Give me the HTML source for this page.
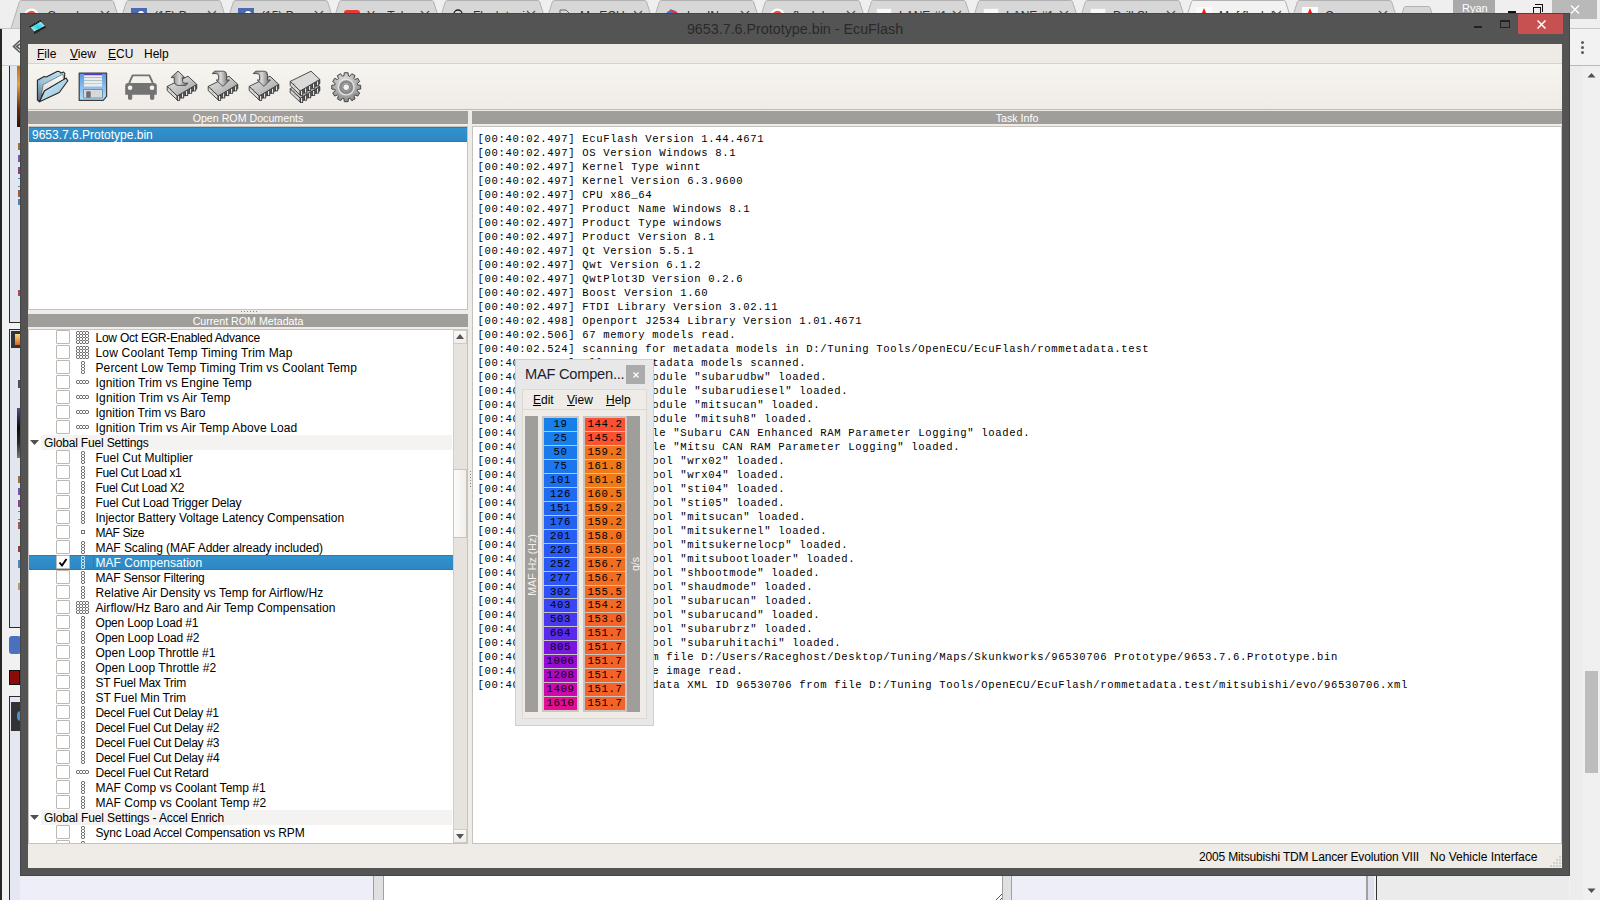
<!DOCTYPE html><html><head><meta charset="utf-8"><style>
*{margin:0;padding:0;box-sizing:border-box}
html,body{width:1600px;height:900px;overflow:hidden;background:#f2f2f2;position:relative;font-family:"Liberation Sans",sans-serif}
.ab{position:absolute}
.t{position:absolute;white-space:nowrap;font-family:"Liberation Sans",sans-serif;font-size:12px;line-height:15px;color:#000}
.m{position:absolute;white-space:pre;font-family:"Liberation Mono",monospace;font-size:10.6px;letter-spacing:0.64px;line-height:14px;color:#000}
u{text-decoration:underline;text-underline-offset:1px;text-decoration-thickness:1px}
</style></head><body>
<div class="ab" style="left:0;top:0;width:1600px;height:28px;background:#efefef"></div><svg class="ab" style="left:10px;top:0" width="120" height="30"><path d="M0.5 30 L9.5 1.5 Q10 0.5 12 0.5 L101 0.5 Q103 0.5 103.5 1.5 L112.5 30 Z" fill="#d7d7d7" stroke="#b2b2b2" stroke-width="1"/></svg><svg class="ab" style="left:24px;top:8px" width="16" height="16"><circle cx="7.5" cy="8" r="7.5" fill="#fff"/><path d="M3.5 8 A4 4 0 0 1 11 6" fill="none" stroke="#e8574a" stroke-width="2.4"/></svg><div class="t" style="left:47px;top:9px;font-size:12px;color:#333">Google</div><svg class="ab" style="left:100px;top:10px" width="10" height="10"><path d="M1 1L9 9M9 1L1 9" stroke="#5a5a5a" stroke-width="1.3"/></svg><svg class="ab" style="left:117px;top:0" width="120" height="30"><path d="M0.5 30 L9.5 1.5 Q10 0.5 12 0.5 L101 0.5 Q103 0.5 103.5 1.5 L112.5 30 Z" fill="#d7d7d7" stroke="#b2b2b2" stroke-width="1"/></svg><div class="ab" style="left:131px;top:8px;width:16px;height:16px;background:#4c6aaf"><div class="ab" style="left:7px;top:3px;width:6px;height:3px;border-radius:3px 3px 0 0;background:#fff"></div></div><div class="t" style="left:154px;top:9px;font-size:12px;color:#333">(15) Pa</div><svg class="ab" style="left:207px;top:10px" width="10" height="10"><path d="M1 1L9 9M9 1L1 9" stroke="#5a5a5a" stroke-width="1.3"/></svg><svg class="ab" style="left:224px;top:0" width="120" height="30"><path d="M0.5 30 L9.5 1.5 Q10 0.5 12 0.5 L101 0.5 Q103 0.5 103.5 1.5 L112.5 30 Z" fill="#d7d7d7" stroke="#b2b2b2" stroke-width="1"/></svg><div class="ab" style="left:238px;top:8px;width:16px;height:16px;background:#4c6aaf"><div class="ab" style="left:7px;top:3px;width:6px;height:3px;border-radius:3px 3px 0 0;background:#fff"></div></div><div class="t" style="left:261px;top:9px;font-size:12px;color:#333">(15) Pa</div><svg class="ab" style="left:314px;top:10px" width="10" height="10"><path d="M1 1L9 9M9 1L1 9" stroke="#5a5a5a" stroke-width="1.3"/></svg><svg class="ab" style="left:330px;top:0" width="120" height="30"><path d="M0.5 30 L9.5 1.5 Q10 0.5 12 0.5 L101 0.5 Q103 0.5 103.5 1.5 L112.5 30 Z" fill="#d7d7d7" stroke="#b2b2b2" stroke-width="1"/></svg><div class="ab" style="left:344px;top:10px;width:16px;height:12px;background:#e53935;border-radius:3px"></div><div class="t" style="left:367px;top:9px;font-size:12px;color:#333">YouTube</div><svg class="ab" style="left:420px;top:10px" width="10" height="10"><path d="M1 1L9 9M9 1L1 9" stroke="#5a5a5a" stroke-width="1.3"/></svg><svg class="ab" style="left:436px;top:0" width="120" height="30"><path d="M0.5 30 L9.5 1.5 Q10 0.5 12 0.5 L101 0.5 Q103 0.5 103.5 1.5 L112.5 30 Z" fill="#d7d7d7" stroke="#b2b2b2" stroke-width="1"/></svg><svg class="ab" style="left:450px;top:8px" width="16" height="16"><path d="M4 6 A4 4 0 0 1 12 6" fill="none" stroke="#222" stroke-width="1.4"/><rect x="1" y="6" width="14" height="9" fill="#111"/></svg><div class="t" style="left:473px;top:9px;font-size:12px;color:#333">Flash tuning</div><svg class="ab" style="left:526px;top:10px" width="10" height="10"><path d="M1 1L9 9M9 1L1 9" stroke="#5a5a5a" stroke-width="1.3"/></svg><svg class="ab" style="left:543px;top:0" width="120" height="30"><path d="M0.5 30 L9.5 1.5 Q10 0.5 12 0.5 L101 0.5 Q103 0.5 103.5 1.5 L112.5 30 Z" fill="#d7d7d7" stroke="#b2b2b2" stroke-width="1"/></svg><svg class="ab" style="left:557px;top:9px" width="16" height="16"><path d="M3 15 V1 H9 L13 5 V15" fill="none" stroke="#666" stroke-width="1"/></svg><div class="t" style="left:580px;top:9px;font-size:12px;color:#333">My ECU</div><svg class="ab" style="left:633px;top:10px" width="10" height="10"><path d="M1 1L9 9M9 1L1 9" stroke="#5a5a5a" stroke-width="1.3"/></svg><svg class="ab" style="left:650px;top:0" width="120" height="30"><path d="M0.5 30 L9.5 1.5 Q10 0.5 12 0.5 L101 0.5 Q103 0.5 103.5 1.5 L112.5 30 Z" fill="#d7d7d7" stroke="#b2b2b2" stroke-width="1"/></svg><svg class="ab" style="left:664px;top:9px" width="16" height="16"><circle cx="8" cy="8" r="7" fill="#3a7bd5"/><path d="M6 1 L12 4 L14 7" stroke="#e53935" stroke-width="2" fill="none"/></svg><div class="t" style="left:687px;top:9px;font-size:12px;color:#333">LanIN</div><svg class="ab" style="left:740px;top:10px" width="10" height="10"><path d="M1 1L9 9M9 1L1 9" stroke="#5a5a5a" stroke-width="1.3"/></svg><svg class="ab" style="left:756px;top:0" width="120" height="30"><path d="M0.5 30 L9.5 1.5 Q10 0.5 12 0.5 L101 0.5 Q103 0.5 103.5 1.5 L112.5 30 Z" fill="#d7d7d7" stroke="#b2b2b2" stroke-width="1"/></svg><svg class="ab" style="left:770px;top:8px" width="16" height="16"><circle cx="7.5" cy="8" r="7.5" fill="#fff"/><path d="M3.5 8 A4 4 0 0 1 11 6" fill="none" stroke="#e8574a" stroke-width="2.4"/></svg><div class="t" style="left:793px;top:9px;font-size:12px;color:#333">flash l</div><svg class="ab" style="left:846px;top:10px" width="10" height="10"><path d="M1 1L9 9M9 1L1 9" stroke="#5a5a5a" stroke-width="1.3"/></svg><svg class="ab" style="left:862px;top:0" width="120" height="30"><path d="M0.5 30 L9.5 1.5 Q10 0.5 12 0.5 L101 0.5 Q103 0.5 103.5 1.5 L112.5 30 Z" fill="#d7d7d7" stroke="#b2b2b2" stroke-width="1"/></svg><div class="ab" style="left:876px;top:8px;width:16px;height:16px;background:#f8f8f8;border:1px solid #ddd"><div class="ab" style="left:3px;top:4px;width:8px;height:3px;border-top:1px dotted #8aa"></div></div><div class="t" style="left:899px;top:9px;font-size:12px;color:#333">LANE #1</div><svg class="ab" style="left:952px;top:10px" width="10" height="10"><path d="M1 1L9 9M9 1L1 9" stroke="#5a5a5a" stroke-width="1.3"/></svg><svg class="ab" style="left:969px;top:0" width="120" height="30"><path d="M0.5 30 L9.5 1.5 Q10 0.5 12 0.5 L101 0.5 Q103 0.5 103.5 1.5 L112.5 30 Z" fill="#d7d7d7" stroke="#b2b2b2" stroke-width="1"/></svg><div class="ab" style="left:983px;top:8px;width:16px;height:16px;background:#f8f8f8;border:1px solid #ddd"><div class="ab" style="left:3px;top:4px;width:8px;height:3px;border-top:1px dotted #8aa"></div></div><div class="t" style="left:1006px;top:9px;font-size:12px;color:#333">LANE #1</div><svg class="ab" style="left:1059px;top:10px" width="10" height="10"><path d="M1 1L9 9M9 1L1 9" stroke="#5a5a5a" stroke-width="1.3"/></svg><svg class="ab" style="left:1076px;top:0" width="120" height="30"><path d="M0.5 30 L9.5 1.5 Q10 0.5 12 0.5 L101 0.5 Q103 0.5 103.5 1.5 L112.5 30 Z" fill="#d7d7d7" stroke="#b2b2b2" stroke-width="1"/></svg><div class="ab" style="left:1090px;top:8px;width:16px;height:16px;background:#f8f8f8;border:1px solid #ddd"><div class="ab" style="left:3px;top:4px;width:8px;height:3px;border-top:1px dotted #8aa"></div></div><div class="t" style="left:1113px;top:9px;font-size:12px;color:#333">Drill Sl</div><svg class="ab" style="left:1166px;top:10px" width="10" height="10"><path d="M1 1L9 9M9 1L1 9" stroke="#5a5a5a" stroke-width="1.3"/></svg><svg class="ab" style="left:1182px;top:0" width="120" height="30"><path d="M0.5 30 L9.5 1.5 Q10 0.5 12 0.5 L101 0.5 Q103 0.5 103.5 1.5 L112.5 30 Z" fill="#f2f2f2" stroke="#b2b2b2" stroke-width="1"/></svg><div class="ab" style="left:1196px;top:7px;width:16px;height:16px;background:#fafafa"><svg class="ab" style="left:3px;top:1px" width="10" height="10"><path d="M5 0 L9 10 H1Z" fill="#f21c0a"/></svg></div><div class="t" style="left:1219px;top:9px;font-size:12px;color:#333">Maf flash l</div><svg class="ab" style="left:1272px;top:10px" width="10" height="10"><path d="M1 1L9 9M9 1L1 9" stroke="#5a5a5a" stroke-width="1.3"/></svg><svg class="ab" style="left:1288px;top:0" width="120" height="30"><path d="M0.5 30 L9.5 1.5 Q10 0.5 12 0.5 L101 0.5 Q103 0.5 103.5 1.5 L112.5 30 Z" fill="#d7d7d7" stroke="#b2b2b2" stroke-width="1"/></svg><div class="ab" style="left:1302px;top:7px;width:16px;height:16px;background:#fafafa"><svg class="ab" style="left:3px;top:1px" width="10" height="10"><path d="M5 0 L9 10 H1Z" fill="#f21c0a"/></svg></div><div class="t" style="left:1325px;top:9px;font-size:12px;color:#333">Com</div><svg class="ab" style="left:1378px;top:10px" width="10" height="10"><path d="M1 1L9 9M9 1L1 9" stroke="#5a5a5a" stroke-width="1.3"/></svg><svg class="ab" style="left:1400px;top:6px" width="36" height="14"><path d="M0.5 14 L4 1.5 Q4.5 0.5 6 0.5 L28 0.5 Q29.5 0.5 30 1.5 L34 14Z" fill="#d7d7d7" stroke="#b2b2b2"/></svg><div class="ab" style="left:1453px;top:0;width:42px;height:13px;background:#a9a9a9"></div><div class="t" style="left:1462px;top:2px;color:#fff;font-size:11px;line-height:12px">Ryan</div><div class="ab" style="left:1508px;top:11px;width:8px;height:2px;background:#111"></div><div class="ab" style="left:1533px;top:7px;width:8px;height:8px;border:1px solid #111"></div><div class="ab" style="left:1535px;top:4px;width:8px;height:8px;border-top:1px solid #111;border-right:1px solid #111"></div><div class="ab" style="left:1552px;top:0;width:45px;height:19px;background:#b9b9b9"></div><svg class="ab" style="left:1570px;top:5px" width="10" height="9"><path d="M1 0.5L9 8.5M9 0.5L1 8.5" stroke="#fff" stroke-width="1.4"/></svg><div class="ab" style="left:1570px;top:28px;width:30px;height:872px;background:#f2f2f2;border-top:1px solid #c8c8c8"></div><div class="ab" style="left:1581px;top:41px;width:3px;height:3px;border-radius:50%;background:#5a5a5a"></div><div class="ab" style="left:1581px;top:46px;width:3px;height:3px;border-radius:50%;background:#5a5a5a"></div><div class="ab" style="left:1581px;top:51px;width:3px;height:3px;border-radius:50%;background:#5a5a5a"></div><div class="ab" style="left:1570px;top:65px;width:30px;height:1px;background:#b9b9b9"></div><div class="ab" style="left:1570px;top:66px;width:13px;height:834px;background:#ececec"></div><div class="ab" style="left:1583px;top:66px;width:17px;height:834px;background:#f0f0f0"></div><svg class="ab" style="left:1587px;top:72px" width="9" height="6"><path d="M0.5 5.5 L4.5 1 L8.5 5.5Z" fill="#505050"/></svg><div class="ab" style="left:1585px;top:671px;width:13px;height:102px;background:#bdbdbd"></div><svg class="ab" style="left:1587px;top:888px" width="9" height="6"><path d="M0.5 0.5 L4.5 5 L8.5 0.5Z" fill="#505050"/></svg><div class="ab" style="left:0;top:29px;width:2px;height:871px;background:#262626"></div><div class="ab" style="left:2px;top:29px;width:18px;height:871px;background:#f1f1f1"></div><div class="ab" style="left:0;top:28px;width:20px;height:1px;background:#c4c4c4"></div><svg class="ab" style="left:12px;top:39px" width="8" height="16"><path d="M8 1.5 L1.5 7.5 L8 13.5 M8 5 L4.5 7.5 L8 10" fill="none" stroke="#5a5a5a" stroke-width="1.6"/></svg><div class="ab" style="left:2px;top:65px;width:18px;height:1px;background:#cacaca"></div><div class="ab" style="left:9px;top:66px;width:11px;height:257px;background:#e2e6ee;border-left:1px solid #2a2a2a;border-bottom:1px solid #2a2a2a"></div><div class="ab" style="left:17px;top:66px;width:3px;height:61px;background:linear-gradient(#c0701a,#e8a030 30%,#6a2a08 70%,#301008)"></div><div class="ab" style="left:18px;top:143px;width:2px;height:7px;background:#8a5020;opacity:0.8"></div><div class="ab" style="left:18px;top:155px;width:2px;height:7px;background:#6a2aa0;opacity:0.8"></div><div class="ab" style="left:18px;top:167px;width:2px;height:7px;background:#7a1a6a;opacity:0.8"></div><div class="ab" style="left:18px;top:178px;width:2px;height:1px;background:#2a70c0;opacity:0.8"></div><div class="ab" style="left:18px;top:186px;width:2px;height:1px;background:#2a70c0;opacity:0.8"></div><div class="ab" style="left:18px;top:190px;width:2px;height:7px;background:#8a3a20;opacity:0.8"></div><div class="ab" style="left:18px;top:199px;width:2px;height:6px;background:#2a6ab0;opacity:0.8"></div><div class="ab" style="left:18px;top:290px;width:2px;height:6px;background:#a02040;opacity:0.8"></div><div class="ab" style="left:9px;top:329px;width:11px;height:299px;background:#e2e6ee;border-left:1px solid #2a2a2a;border-top:1px solid #2a2a2a;border-bottom:1px solid #2a2a2a"></div><div class="ab" style="left:11px;top:331px;width:9px;height:17px;background:#333"></div><div class="ab" style="left:15px;top:334px;width:5px;height:11px;background:linear-gradient(#f8e080,#e06020)"></div><div class="ab" style="left:17px;top:408px;width:3px;height:50px;background:linear-gradient(#5a4a8a,#0a0a10 40%,#2a2a2a 70%,#7a7a70)"></div><div class="ab" style="left:18px;top:380px;width:2px;height:8px;background:#2a2a2a;opacity:0.8"></div><div class="ab" style="left:18px;top:476px;width:2px;height:7px;background:#8a5020;opacity:0.8"></div><div class="ab" style="left:18px;top:488px;width:2px;height:7px;background:#6a2aa0;opacity:0.8"></div><div class="ab" style="left:18px;top:500px;width:2px;height:7px;background:#7a1a6a;opacity:0.8"></div><div class="ab" style="left:18px;top:511px;width:2px;height:1px;background:#2a70c0;opacity:0.8"></div><div class="ab" style="left:18px;top:519px;width:2px;height:1px;background:#2a70c0;opacity:0.8"></div><div class="ab" style="left:18px;top:522px;width:2px;height:7px;background:#8a3a20;opacity:0.8"></div><div class="ab" style="left:18px;top:546px;width:2px;height:6px;background:#8a1010;opacity:0.8"></div><div class="ab" style="left:18px;top:560px;width:2px;height:8px;background:#3070b0;opacity:0.8"></div><div class="ab" style="left:18px;top:583px;width:2px;height:7px;background:#c08040;opacity:0.8"></div><div class="ab" style="left:9px;top:636px;width:12px;height:18px;background:#4a70c0;border-radius:3px"></div><div class="ab" style="left:9px;top:670px;width:11px;height:15px;background:#8b0a0a;border:1px solid #111"></div><div class="ab" style="left:9px;top:696px;width:11px;height:204px;background:#e4e7f2;border-left:1px solid #2a2a2a;border-top:1px solid #2a2a2a"></div><div class="ab" style="left:11px;top:702px;width:9px;height:29px;background:#333"></div><div class="ab" style="left:17px;top:711px;width:4px;height:10px;background:#4a90d0;border-radius:4px 0 0 4px"></div><div class="ab" style="left:20px;top:875px;width:353px;height:25px;background:#eeeef8"></div><div class="ab" style="left:373px;top:875px;width:11px;height:25px;background:#e0e0e0;border-left:1px solid #a0a0a0;border-right:1px solid #a0a0a0"></div><div class="ab" style="left:384px;top:875px;width:618px;height:25px;background:#fff"></div><div class="ab" style="left:1002px;top:875px;width:10px;height:25px;background:#e0e0e0;border-left:1px solid #a0a0a0;border-right:1px solid #a0a0a0"></div><div class="ab" style="left:1012px;top:875px;width:356px;height:25px;background:#eeeef8"></div><div class="ab" style="left:1366px;top:875px;width:2px;height:25px;background:#a0a0a0"></div><div class="ab" style="left:1368px;top:875px;width:6px;height:25px;background:#dde0ee"></div><div class="ab" style="left:1376px;top:875px;width:1px;height:25px;background:#333"></div><div class="ab" style="left:1377px;top:875px;width:192px;height:25px;background:#ebebeb"></div><svg class="ab" style="left:992px;top:892px" width="10" height="8"><path d="M4 8 L10 2 M8 8 L10 6" stroke="#555" stroke-width="1"/></svg><div class="ab" style="left:20px;top:13px;width:1550px;height:863px;background:#545454;border:1px solid #464646"></div><div class="t" style="left:0;width:1590px;top:21px;text-align:center;font-size:14.3px;line-height:17px;color:#2a2a2a">9653.7.6.Prototype.bin - EcuFlash</div><div class="ab" style="left:1474px;top:26px;width:8px;height:2px;background:#222"></div><div class="ab" style="left:1500px;top:20px;width:10px;height:8px;border:1px solid #222;border-top-width:2px"></div><div class="ab" style="left:1518px;top:14px;width:45px;height:20px;background:#c75050"></div><svg class="ab" style="left:1537px;top:20px" width="9" height="9"><path d="M0.5 0.5 L8.5 8.5 M8.5 0.5 L0.5 8.5" stroke="#fff" stroke-width="1.5"/></svg><svg class="ab" style="left:29px;top:19px" width="19" height="16"><defs><radialGradient id="gcy" cx="0.5" cy="0.5" r="0.6"><stop offset="0" stop-color="#00dcec"/><stop offset="0.6" stop-color="#7ee0ea"/><stop offset="1" stop-color="#f0f0f0"/></radialGradient></defs><circle cx="1.60" cy="7.40" r="0.9" fill="#111"/><circle cx="3.55" cy="6.28" r="0.9" fill="#111"/><circle cx="5.50" cy="5.16" r="0.9" fill="#111"/><circle cx="7.45" cy="4.04" r="0.9" fill="#111"/><circle cx="9.40" cy="2.92" r="0.9" fill="#111"/><circle cx="11.35" cy="1.80" r="0.9" fill="#111"/><path d="M5.60 13.20 l0.6 1.6" stroke="#111" stroke-width="1.4"/><path d="M7.60 12.05 l0.6 1.6" stroke="#111" stroke-width="1.4"/><path d="M9.60 10.90 l0.6 1.6" stroke="#111" stroke-width="1.4"/><path d="M11.60 9.75 l0.6 1.6" stroke="#111" stroke-width="1.4"/><path d="M13.60 8.60 l0.6 1.6" stroke="#111" stroke-width="1.4"/><path d="M15.60 7.45 l0.6 1.6" stroke="#111" stroke-width="1.4"/><path d="M1.8 8.4 L11.7 2.7 L15.9 6.9 L5.4 12.6Z" fill="url(#gcy)"/><path d="M15.9 6.9 L16 8.2 L5.6 13.8 L5.4 12.6Z" fill="#1a1a1a"/></svg><div class="ab" style="left:28px;top:44px;width:1534px;height:824px;background:#efebe7"></div><div class="ab" style="left:28px;top:44px;width:1534px;height:20px;background:#eeebe6;border-bottom:1px solid #d6d2cd"></div><div class="t" style="left:37px;top:47px;line-height:15px"><u>F</u>ile</div><div class="t" style="left:70px;top:47px;line-height:15px"><u>V</u>iew</div><div class="t" style="left:108px;top:47px;line-height:15px"><u>E</u>CU</div><div class="t" style="left:144px;top:47px">Help</div><div class="ab" style="left:28px;top:64px;width:1534px;height:46px;background:linear-gradient(#f7f5f0,#efebe6);border-bottom:1px solid #bfbbb6"></div><div class="ab" style="left:28px;top:111px;width:440px;height:13px;background:#a09e9a"></div><div class="t" style="left:28px;width:440px;top:111px;text-align:center;color:#fff;line-height:15px;font-size:10.67px">Open ROM Documents</div><div class="ab" style="left:472px;top:111px;width:1090px;height:13px;background:#a09e9a"></div><div class="t" style="left:472px;width:1090px;top:111px;text-align:center;color:#fff;line-height:15px;font-size:10.67px">Task Info</div><div class="ab" style="left:28px;top:126px;width:440px;height:184px;background:#fff;border:1px solid #c6c2bd"></div><div class="ab" style="left:29px;top:127px;width:438px;height:15px;background:linear-gradient(#3292cd,#2d87c3);border-top:1px solid #2b7bb6;border-bottom:1px solid #2b7bb6"></div><div class="t" style="left:32px;top:128px;color:#fff">9653.7.6.Prototype.bin</div><div class="ab" style="left:28px;top:314px;width:440px;height:13px;background:#a09e9a"></div><div class="t" style="left:28px;width:440px;top:314px;text-align:center;color:#fff;line-height:15px;font-size:10.67px">Current ROM Metadata</div><div class="ab" style="left:241px;top:311px;width:1px;height:1px;background:#8a8682"></div><div class="ab" style="left:244px;top:311px;width:1px;height:1px;background:#8a8682"></div><div class="ab" style="left:247px;top:311px;width:1px;height:1px;background:#8a8682"></div><div class="ab" style="left:250px;top:311px;width:1px;height:1px;background:#8a8682"></div><div class="ab" style="left:253px;top:311px;width:1px;height:1px;background:#8a8682"></div><div class="ab" style="left:256px;top:311px;width:1px;height:1px;background:#8a8682"></div><div class="ab" style="left:28px;top:329px;width:440px;height:515px;background:#fff;border:1px solid #c6c2bd;overflow:hidden" id="tree"></div><div class="ab" style="left:472px;top:126px;width:1090px;height:718px;background:#fff;border:1px solid #c6c2bd"></div><div class="t" style="left:1199px;top:850px;letter-spacing:-0.16px">2005 Mitsubishi TDM Lancer Evolution VIII</div><div class="t" style="left:1430px;top:850px">No Vehicle Interface</div><svg width="0" height="0" style="position:absolute"><defs><g id="ig" shape-rendering="crispEdges"><rect x="0" y="0" width="13" height="13" fill="#727272"/><rect x="1" y="1" width="2" height="2" fill="#fff"/><rect x="1" y="4" width="2" height="2" fill="#fff"/><rect x="1" y="7" width="2" height="2" fill="#fff"/><rect x="1" y="10" width="2" height="2" fill="#fff"/><rect x="4" y="1" width="2" height="2" fill="#fff"/><rect x="4" y="4" width="2" height="2" fill="#fff"/><rect x="4" y="7" width="2" height="2" fill="#fff"/><rect x="4" y="10" width="2" height="2" fill="#fff"/><rect x="7" y="1" width="2" height="2" fill="#fff"/><rect x="7" y="4" width="2" height="2" fill="#fff"/><rect x="7" y="7" width="2" height="2" fill="#fff"/><rect x="7" y="10" width="2" height="2" fill="#fff"/><rect x="10" y="1" width="2" height="2" fill="#fff"/><rect x="10" y="4" width="2" height="2" fill="#fff"/><rect x="10" y="7" width="2" height="2" fill="#fff"/><rect x="10" y="10" width="2" height="2" fill="#fff"/><rect x="0" y="0" width="1" height="1" fill="#cfcfcf"/><rect x="0" y="3" width="1" height="1" fill="#cfcfcf"/><rect x="0" y="6" width="1" height="1" fill="#cfcfcf"/><rect x="0" y="9" width="1" height="1" fill="#cfcfcf"/><rect x="0" y="12" width="1" height="1" fill="#cfcfcf"/><rect x="3" y="0" width="1" height="1" fill="#cfcfcf"/><rect x="3" y="3" width="1" height="1" fill="#cfcfcf"/><rect x="3" y="6" width="1" height="1" fill="#cfcfcf"/><rect x="3" y="9" width="1" height="1" fill="#cfcfcf"/><rect x="3" y="12" width="1" height="1" fill="#cfcfcf"/><rect x="6" y="0" width="1" height="1" fill="#cfcfcf"/><rect x="6" y="3" width="1" height="1" fill="#cfcfcf"/><rect x="6" y="6" width="1" height="1" fill="#cfcfcf"/><rect x="6" y="9" width="1" height="1" fill="#cfcfcf"/><rect x="6" y="12" width="1" height="1" fill="#cfcfcf"/><rect x="9" y="0" width="1" height="1" fill="#cfcfcf"/><rect x="9" y="3" width="1" height="1" fill="#cfcfcf"/><rect x="9" y="6" width="1" height="1" fill="#cfcfcf"/><rect x="9" y="9" width="1" height="1" fill="#cfcfcf"/><rect x="9" y="12" width="1" height="1" fill="#cfcfcf"/><rect x="12" y="0" width="1" height="1" fill="#cfcfcf"/><rect x="12" y="3" width="1" height="1" fill="#cfcfcf"/><rect x="12" y="6" width="1" height="1" fill="#cfcfcf"/><rect x="12" y="9" width="1" height="1" fill="#cfcfcf"/><rect x="12" y="12" width="1" height="1" fill="#cfcfcf"/></g><g id="iv" shape-rendering="crispEdges"><rect x="0" y="0" width="4" height="13" fill="#727272"/><rect x="1" y="1" width="2" height="2" fill="#fff"/><rect x="1" y="4" width="2" height="2" fill="#fff"/><rect x="1" y="7" width="2" height="2" fill="#fff"/><rect x="1" y="10" width="2" height="2" fill="#fff"/><rect x="0" y="0" width="1" height="1" fill="#cfcfcf"/><rect x="0" y="3" width="1" height="1" fill="#cfcfcf"/><rect x="0" y="6" width="1" height="1" fill="#cfcfcf"/><rect x="0" y="9" width="1" height="1" fill="#cfcfcf"/><rect x="0" y="12" width="1" height="1" fill="#cfcfcf"/><rect x="3" y="0" width="1" height="1" fill="#cfcfcf"/><rect x="3" y="3" width="1" height="1" fill="#cfcfcf"/><rect x="3" y="6" width="1" height="1" fill="#cfcfcf"/><rect x="3" y="9" width="1" height="1" fill="#cfcfcf"/><rect x="3" y="12" width="1" height="1" fill="#cfcfcf"/></g><g id="iw" shape-rendering="crispEdges"><rect x="0" y="0" width="4" height="13" fill="#cfe6f6"/><rect x="1" y="1" width="2" height="2" fill="#308cc6"/><rect x="1" y="4" width="2" height="2" fill="#308cc6"/><rect x="1" y="7" width="2" height="2" fill="#308cc6"/><rect x="1" y="10" width="2" height="2" fill="#308cc6"/><rect x="0" y="0" width="1" height="1" fill="#80b8dc"/><rect x="0" y="3" width="1" height="1" fill="#80b8dc"/><rect x="0" y="6" width="1" height="1" fill="#80b8dc"/><rect x="0" y="9" width="1" height="1" fill="#80b8dc"/><rect x="0" y="12" width="1" height="1" fill="#80b8dc"/><rect x="3" y="0" width="1" height="1" fill="#80b8dc"/><rect x="3" y="3" width="1" height="1" fill="#80b8dc"/><rect x="3" y="6" width="1" height="1" fill="#80b8dc"/><rect x="3" y="9" width="1" height="1" fill="#80b8dc"/><rect x="3" y="12" width="1" height="1" fill="#80b8dc"/></g><g id="ih" shape-rendering="crispEdges"><rect x="0" y="0" width="13" height="4" fill="#727272"/><rect x="1" y="1" width="2" height="2" fill="#fff"/><rect x="4" y="1" width="2" height="2" fill="#fff"/><rect x="7" y="1" width="2" height="2" fill="#fff"/><rect x="10" y="1" width="2" height="2" fill="#fff"/><rect x="0" y="0" width="1" height="1" fill="#cfcfcf"/><rect x="0" y="3" width="1" height="1" fill="#cfcfcf"/><rect x="3" y="0" width="1" height="1" fill="#cfcfcf"/><rect x="3" y="3" width="1" height="1" fill="#cfcfcf"/><rect x="6" y="0" width="1" height="1" fill="#cfcfcf"/><rect x="6" y="3" width="1" height="1" fill="#cfcfcf"/><rect x="9" y="0" width="1" height="1" fill="#cfcfcf"/><rect x="9" y="3" width="1" height="1" fill="#cfcfcf"/><rect x="12" y="0" width="1" height="1" fill="#cfcfcf"/><rect x="12" y="3" width="1" height="1" fill="#cfcfcf"/></g></defs></svg><div class="ab" style="left:29px;top:330px;width:424px;height:513px;overflow:hidden"><div class="ab" style="left:-29px;top:-330px;width:500px;height:900px"><div class="ab" style="left:56px;top:330px;width:14px;height:14px;background:#fff;border:1px solid #bdb8b3;border-radius:1px"></div><svg class="ab" style="left:76px;top:331px" width="13" height="13"><use href="#ig"/></svg><div class="t" style="left:95.5px;top:331px;letter-spacing:-0.238px">Low Oct EGR-Enabled Advance</div><div class="ab" style="left:56px;top:345px;width:14px;height:14px;background:#fff;border:1px solid #bdb8b3;border-radius:1px"></div><svg class="ab" style="left:76px;top:346px" width="13" height="13"><use href="#ig"/></svg><div class="t" style="left:95.5px;top:346px;letter-spacing:0.184px">Low Coolant Temp Timing Trim Map</div><div class="ab" style="left:56px;top:360px;width:14px;height:14px;background:#fff;border:1px solid #bdb8b3;border-radius:1px"></div><svg class="ab" style="left:81px;top:361px" width="4" height="13"><use href="#iv"/></svg><div class="t" style="left:95.5px;top:361px;letter-spacing:0.102px">Percent Low Temp Timing Trim vs Coolant Temp</div><div class="ab" style="left:56px;top:375px;width:14px;height:14px;background:#fff;border:1px solid #bdb8b3;border-radius:1px"></div><svg class="ab" style="left:76px;top:380px" width="13" height="4"><use href="#ih"/></svg><div class="t" style="left:95.5px;top:376px;letter-spacing:0.089px">Ignition Trim vs Engine Temp</div><div class="ab" style="left:56px;top:390px;width:14px;height:14px;background:#fff;border:1px solid #bdb8b3;border-radius:1px"></div><svg class="ab" style="left:76px;top:395px" width="13" height="4"><use href="#ih"/></svg><div class="t" style="left:95.5px;top:391px;letter-spacing:0.188px">Ignition Trim vs Air Temp</div><div class="ab" style="left:56px;top:405px;width:14px;height:14px;background:#fff;border:1px solid #bdb8b3;border-radius:1px"></div><svg class="ab" style="left:76px;top:410px" width="13" height="4"><use href="#ih"/></svg><div class="t" style="left:95.5px;top:406px;letter-spacing:0.025px">Ignition Trim vs Baro</div><div class="ab" style="left:56px;top:420px;width:14px;height:14px;background:#fff;border:1px solid #bdb8b3;border-radius:1px"></div><svg class="ab" style="left:76px;top:425px" width="13" height="4"><use href="#ih"/></svg><div class="t" style="left:95.5px;top:421px;letter-spacing:0.129px">Ignition Trim vs Air Temp Above Load</div><div class="ab" style="left:41px;top:435px;width:411px;height:15px;background:#f5f3f1"></div><svg class="ab" style="left:30px;top:440px" width="9" height="5"><path d="M0 0H9L4.5 5Z" fill="#505050"/></svg><div class="t" style="left:44px;top:436px;letter-spacing:-0.171px">Global Fuel Settings</div><div class="ab" style="left:56px;top:450px;width:14px;height:14px;background:#fff;border:1px solid #bdb8b3;border-radius:1px"></div><svg class="ab" style="left:81px;top:451px" width="4" height="13"><use href="#iv"/></svg><div class="t" style="left:95.5px;top:451px;letter-spacing:0.033px">Fuel Cut Multiplier</div><div class="ab" style="left:56px;top:465px;width:14px;height:14px;background:#fff;border:1px solid #bdb8b3;border-radius:1px"></div><svg class="ab" style="left:81px;top:466px" width="4" height="13"><use href="#iv"/></svg><div class="t" style="left:95.5px;top:466px;letter-spacing:-0.34px">Fuel Cut Load x1</div><div class="ab" style="left:56px;top:480px;width:14px;height:14px;background:#fff;border:1px solid #bdb8b3;border-radius:1px"></div><svg class="ab" style="left:81px;top:481px" width="4" height="13"><use href="#iv"/></svg><div class="t" style="left:95.5px;top:481px;letter-spacing:-0.3px">Fuel Cut Load X2</div><div class="ab" style="left:56px;top:495px;width:14px;height:14px;background:#fff;border:1px solid #bdb8b3;border-radius:1px"></div><svg class="ab" style="left:81px;top:496px" width="4" height="13"><use href="#iv"/></svg><div class="t" style="left:95.5px;top:496px;letter-spacing:-0.158px">Fuel Cut Load Trigger Delay</div><div class="ab" style="left:56px;top:510px;width:14px;height:14px;background:#fff;border:1px solid #bdb8b3;border-radius:1px"></div><svg class="ab" style="left:81px;top:511px" width="4" height="13"><use href="#iv"/></svg><div class="t" style="left:95.5px;top:511px;letter-spacing:-0.036px">Injector Battery Voltage Latency Compensation</div><div class="ab" style="left:56px;top:525px;width:14px;height:14px;background:#fff;border:1px solid #bdb8b3;border-radius:1px"></div><svg class="ab" style="left:81px;top:530px" width="4" height="4"><rect x="0" y="0" width="4" height="4" fill="#727272"/><rect x="1" y="1" width="2" height="2" fill="#fff"/></svg><div class="t" style="left:95.5px;top:526px;letter-spacing:-0.443px">MAF Size</div><div class="ab" style="left:56px;top:540px;width:14px;height:14px;background:#fff;border:1px solid #bdb8b3;border-radius:1px"></div><svg class="ab" style="left:81px;top:541px" width="4" height="13"><use href="#iv"/></svg><div class="t" style="left:95.5px;top:541px;letter-spacing:-0.067px">MAF Scaling (MAF Adder already included)</div><div class="ab" style="left:29px;top:555px;width:424px;height:15px;background:linear-gradient(#3292cd,#2d87c3);border-top:1px solid #2b7bb6;border-bottom:1px solid #2b7bb6"></div><div class="ab" style="left:93px;top:555px;width:1px;height:15px;background:#2b7bb6"></div><div class="ab" style="left:56px;top:555px;width:14px;height:14px;background:#fff;border:1px solid #bdb8b3;border-radius:1px"></div><svg class="ab" style="left:58px;top:558px" width="10" height="9"><path d="M1.5 4.5 L4 7.5 L8.5 1" fill="none" stroke="#000" stroke-width="1.9"/></svg><svg class="ab" style="left:81px;top:556px" width="4" height="13"><use href="#iw"/></svg><div class="t" style="left:95.5px;top:556px;color:#fff;letter-spacing:0.047px">MAF Compensation</div><div class="ab" style="left:56px;top:570px;width:14px;height:14px;background:#fff;border:1px solid #bdb8b3;border-radius:1px"></div><svg class="ab" style="left:81px;top:571px" width="4" height="13"><use href="#iv"/></svg><div class="t" style="left:95.5px;top:571px;letter-spacing:-0.179px">MAF Sensor Filtering</div><div class="ab" style="left:56px;top:585px;width:14px;height:14px;background:#fff;border:1px solid #bdb8b3;border-radius:1px"></div><svg class="ab" style="left:81px;top:586px" width="4" height="13"><use href="#iv"/></svg><div class="t" style="left:95.5px;top:586px;letter-spacing:0.043px">Relative Air Density vs Temp for Airflow/Hz</div><div class="ab" style="left:56px;top:600px;width:14px;height:14px;background:#fff;border:1px solid #bdb8b3;border-radius:1px"></div><svg class="ab" style="left:76px;top:601px" width="13" height="13"><use href="#ig"/></svg><div class="t" style="left:95.5px;top:601px;letter-spacing:0.085px">Airflow/Hz Baro and Air Temp Compensation</div><div class="ab" style="left:56px;top:615px;width:14px;height:14px;background:#fff;border:1px solid #bdb8b3;border-radius:1px"></div><svg class="ab" style="left:81px;top:616px" width="4" height="13"><use href="#iv"/></svg><div class="t" style="left:95.5px;top:616px;letter-spacing:-0.194px">Open Loop Load #1</div><div class="ab" style="left:56px;top:630px;width:14px;height:14px;background:#fff;border:1px solid #bdb8b3;border-radius:1px"></div><svg class="ab" style="left:81px;top:631px" width="4" height="13"><use href="#iv"/></svg><div class="t" style="left:95.5px;top:631px;letter-spacing:-0.131px">Open Loop Load #2</div><div class="ab" style="left:56px;top:645px;width:14px;height:14px;background:#fff;border:1px solid #bdb8b3;border-radius:1px"></div><svg class="ab" style="left:81px;top:646px" width="4" height="13"><use href="#iv"/></svg><div class="t" style="left:95.5px;top:646px;letter-spacing:0.005px">Open Loop Throttle #1</div><div class="ab" style="left:56px;top:660px;width:14px;height:14px;background:#fff;border:1px solid #bdb8b3;border-radius:1px"></div><svg class="ab" style="left:81px;top:661px" width="4" height="13"><use href="#iv"/></svg><div class="t" style="left:95.5px;top:661px;letter-spacing:0.035px">Open Loop Throttle #2</div><div class="ab" style="left:56px;top:675px;width:14px;height:14px;background:#fff;border:1px solid #bdb8b3;border-radius:1px"></div><svg class="ab" style="left:81px;top:676px" width="4" height="13"><use href="#iv"/></svg><div class="t" style="left:95.5px;top:676px;letter-spacing:-0.247px">ST Fuel Max Trim</div><div class="ab" style="left:56px;top:690px;width:14px;height:14px;background:#fff;border:1px solid #bdb8b3;border-radius:1px"></div><svg class="ab" style="left:81px;top:691px" width="4" height="13"><use href="#iv"/></svg><div class="t" style="left:95.5px;top:691px;letter-spacing:-0.04px">ST Fuel Min Trim</div><div class="ab" style="left:56px;top:705px;width:14px;height:14px;background:#fff;border:1px solid #bdb8b3;border-radius:1px"></div><svg class="ab" style="left:81px;top:706px" width="4" height="13"><use href="#iv"/></svg><div class="t" style="left:95.5px;top:706px;letter-spacing:-0.3px">Decel Fuel Cut Delay #1</div><div class="ab" style="left:56px;top:720px;width:14px;height:14px;background:#fff;border:1px solid #bdb8b3;border-radius:1px"></div><svg class="ab" style="left:81px;top:721px" width="4" height="13"><use href="#iv"/></svg><div class="t" style="left:95.5px;top:721px;letter-spacing:-0.277px">Decel Fuel Cut Delay #2</div><div class="ab" style="left:56px;top:735px;width:14px;height:14px;background:#fff;border:1px solid #bdb8b3;border-radius:1px"></div><svg class="ab" style="left:81px;top:736px" width="4" height="13"><use href="#iv"/></svg><div class="t" style="left:95.5px;top:736px;letter-spacing:-0.277px">Decel Fuel Cut Delay #3</div><div class="ab" style="left:56px;top:750px;width:14px;height:14px;background:#fff;border:1px solid #bdb8b3;border-radius:1px"></div><svg class="ab" style="left:81px;top:751px" width="4" height="13"><use href="#iv"/></svg><div class="t" style="left:95.5px;top:751px;letter-spacing:-0.273px">Decel Fuel Cut Delay #4</div><div class="ab" style="left:56px;top:765px;width:14px;height:14px;background:#fff;border:1px solid #bdb8b3;border-radius:1px"></div><svg class="ab" style="left:76px;top:770px" width="13" height="4"><use href="#ih"/></svg><div class="t" style="left:95.5px;top:766px;letter-spacing:-0.275px">Decel Fuel Cut Retard</div><div class="ab" style="left:56px;top:780px;width:14px;height:14px;background:#fff;border:1px solid #bdb8b3;border-radius:1px"></div><svg class="ab" style="left:81px;top:781px" width="4" height="13"><use href="#iv"/></svg><div class="t" style="left:95.5px;top:781px;letter-spacing:0.015px">MAF Comp vs Coolant Temp #1</div><div class="ab" style="left:56px;top:795px;width:14px;height:14px;background:#fff;border:1px solid #bdb8b3;border-radius:1px"></div><svg class="ab" style="left:81px;top:796px" width="4" height="13"><use href="#iv"/></svg><div class="t" style="left:95.5px;top:796px;letter-spacing:0.035px">MAF Comp vs Coolant Temp #2</div><div class="ab" style="left:41px;top:810px;width:411px;height:15px;background:#f5f3f1"></div><svg class="ab" style="left:30px;top:815px" width="9" height="5"><path d="M0 0H9L4.5 5Z" fill="#505050"/></svg><div class="t" style="left:44px;top:811px;letter-spacing:-0.135px">Global Fuel Settings - Accel Enrich</div><div class="ab" style="left:56px;top:825px;width:14px;height:14px;background:#fff;border:1px solid #bdb8b3;border-radius:1px"></div><svg class="ab" style="left:81px;top:826px" width="4" height="13"><use href="#iv"/></svg><div class="t" style="left:95.5px;top:826px;letter-spacing:-0.165px">Sync Load Accel Compensation vs RPM</div><div class="ab" style="left:56px;top:840px;width:14px;height:14px;background:#fff;border:1px solid #bdb8b3;border-radius:1px"></div><svg class="ab" style="left:81px;top:841px" width="4" height="13"><use href="#iv"/></svg><div class="t" style="left:95.5px;top:841px;letter-spacing:0px"></div></div></div><div class="ab" style="left:453px;top:330px;width:14px;height:513px;background:#e6e3df;border-left:1px solid #d2cec9"></div><div class="ab" style="left:453px;top:330px;width:14px;height:14px;background:linear-gradient(#fafaf9,#f0edea);border:1px solid #cfcbc6"></div><svg class="ab" style="left:456px;top:334px" width="8" height="5"><path d="M0 5H8L4 0Z" fill="#555"/></svg><div class="ab" style="left:453px;top:829px;width:14px;height:14px;background:linear-gradient(#fafaf9,#f0edea);border:1px solid #cfcbc6"></div><svg class="ab" style="left:456px;top:834px" width="8" height="5"><path d="M0 0H8L4 5Z" fill="#555"/></svg><div class="ab" style="left:453px;top:469px;width:14px;height:69px;background:linear-gradient(90deg,#fbfbfa,#f1efec);border:1px solid #c8c4bf"></div><div class="ab" style="left:470px;top:471px;width:1px;height:1px;background:#8a8682"></div><div class="ab" style="left:470px;top:474px;width:1px;height:1px;background:#8a8682"></div><div class="ab" style="left:470px;top:477px;width:1px;height:1px;background:#8a8682"></div><div class="ab" style="left:470px;top:480px;width:1px;height:1px;background:#8a8682"></div><div class="ab" style="left:470px;top:483px;width:1px;height:1px;background:#8a8682"></div><div class="ab" style="left:470px;top:486px;width:1px;height:1px;background:#8a8682"></div><div class="ab" style="left:1559px;top:856px;width:2px;height:2px;background:#d2cec9"></div><div class="ab" style="left:1556px;top:859px;width:2px;height:2px;background:#d2cec9"></div><div class="ab" style="left:1559px;top:859px;width:2px;height:2px;background:#d2cec9"></div><div class="ab" style="left:1553px;top:862px;width:2px;height:2px;background:#d2cec9"></div><div class="ab" style="left:1556px;top:862px;width:2px;height:2px;background:#d2cec9"></div><div class="ab" style="left:1559px;top:862px;width:2px;height:2px;background:#d2cec9"></div><div class="ab" style="left:1550px;top:865px;width:2px;height:2px;background:#d2cec9"></div><div class="ab" style="left:1553px;top:865px;width:2px;height:2px;background:#d2cec9"></div><div class="ab" style="left:1556px;top:865px;width:2px;height:2px;background:#d2cec9"></div><div class="ab" style="left:1559px;top:865px;width:2px;height:2px;background:#d2cec9"></div><div class="m" style="left:477.4px;top:132px">[00:40:02.497] EcuFlash Version 1.44.4671
[00:40:02.497] OS Version Windows 8.1
[00:40:02.497] Kernel Type winnt
[00:40:02.497] Kernel Version 6.3.9600
[00:40:02.497] CPU x86_64
[00:40:02.497] Product Name Windows 8.1
[00:40:02.497] Product Type windows
[00:40:02.497] Product Version 8.1
[00:40:02.497] Qt Version 5.5.1
[00:40:02.497] Qwt Version 6.1.2
[00:40:02.497] QwtPlot3D Version 0.2.6
[00:40:02.497] Boost Version 1.60
[00:40:02.497] FTDI Library Version 3.02.11
[00:40:02.498] Openport J2534 Library Version 1.01.4671
[00:40:02.506] 67 memory models read.
[00:40:02.524] scanning for metadata models in D:/Tuning Tools/OpenECU/EcuFlash/rommetadata.test
[00:40:03.531] all ROM metadata models scanned.
[00:40:03.533] metadata module &quot;subarudbw&quot; loaded.
[00:40:03.533] metadata module &quot;subarudiesel&quot; loaded.
[00:40:03.534] metadata module &quot;mitsucan&quot; loaded.
[00:40:03.534] metadata module &quot;mitsuh8&quot; loaded.
[00:40:03.540] found module &quot;Subaru CAN Enhanced RAM Parameter Logging&quot; loaded.
[00:40:03.541] found module &quot;Mitsu CAN RAM Parameter Logging&quot; loaded.
[00:40:03.550] flashing tool &quot;wrx02&quot; loaded.
[00:40:03.550] flashing tool &quot;wrx04&quot; loaded.
[00:40:03.550] flashing tool &quot;sti04&quot; loaded.
[00:40:03.550] flashing tool &quot;sti05&quot; loaded.
[00:40:03.551] flashing tool &quot;mitsucan&quot; loaded.
[00:40:03.551] flashing tool &quot;mitsukernel&quot; loaded.
[00:40:03.551] flashing tool &quot;mitsukernelocp&quot; loaded.
[00:40:03.551] flashing tool &quot;mitsubootloader&quot; loaded.
[00:40:03.552] flashing tool &quot;shbootmode&quot; loaded.
[00:40:03.552] flashing tool &quot;shaudmode&quot; loaded.
[00:40:03.552] flashing tool &quot;subarucan&quot; loaded.
[00:40:03.552] flashing tool &quot;subarucand&quot; loaded.
[00:40:03.553] flashing tool &quot;subarubrz&quot; loaded.
[00:40:03.553] flashing tool &quot;subaruhitachi&quot; loaded.
[00:40:04.120] loaded from file D:/Users/Raceghost/Desktop/Tuning/Maps/Skunkworks/96530706 Prototype/9653.7.6.Prototype.bin
[00:40:04.121] 104857 byte image read.
[00:40:04.130] using metadata XML ID 96530706 from file D:/Tuning Tools/OpenECU/EcuFlash/rommetadata.test/mitsubishi/evo/96530706.xml</div><div class="ab" style="left:515px;top:359px;width:139px;height:367px;background:#e8e8e8;border:1px solid #d0d0d0"></div><div class="t" style="left:525px;top:365px;font-size:14.67px;line-height:18px;color:#1d1d30;letter-spacing:-0.25px">MAF Compen...</div><div class="ab" style="left:626px;top:365px;width:19px;height:19px;background:#ababab"></div><svg class="ab" style="left:632.5px;top:371.5px" width="6" height="6"><path d="M0.5 0.5L5.5 5.5M5.5 0.5L0.5 5.5" stroke="#fff" stroke-width="1.3"/></svg><div class="ab" style="left:522px;top:389px;width:125px;height:330px;background:#efebe6;border:1px solid #dcd8d3"></div><div class="ab" style="left:523px;top:409px;width:123px;height:1px;background:#dcd8d3"></div><div class="t" style="left:533px;top:393px"><u>E</u>dit</div><div class="t" style="left:567px;top:393px"><u>V</u>iew</div><div class="t" style="left:606px;top:393px"><u>H</u>elp</div><div class="ab" style="left:525px;top:416px;width:13px;height:296px;background:#a09e9a"></div><div class="t" style="left:531.5px;top:565px;font-size:10.67px;line-height:12px;color:#f4f0ea;transform:translate(-50%,-50%) rotate(-90deg)">MAF Hz (Hz)</div><div class="ab" style="left:542px;top:416px;width:37px;height:296px;background:#c9c5c0"></div><div class="ab" style="left:583px;top:416px;width:44px;height:296px;background:#c9c5c0"></div><div class="ab" style="left:627px;top:416px;width:13px;height:296px;background:#a09e9a;overflow:hidden"><div class="t" style="left:7.5px;top:148px;font-size:10.67px;line-height:12px;color:#f4f0ea;transform:translate(-50%,-50%) rotate(-90deg)">g/s</div></div><div class="m" style="left:544px;top:418px;width:33px;height:13px;background:#1680ea;text-align:center;line-height:13px">19</div><div class="m" style="left:585px;top:418px;width:40px;height:13px;background:#fa5032;text-align:center;line-height:13px">144.2</div><div class="m" style="left:544px;top:432px;width:33px;height:13px;background:#187eeb;text-align:center;line-height:13px">25</div><div class="m" style="left:585px;top:432px;width:40px;height:13px;background:#f95330;text-align:center;line-height:13px">145.5</div><div class="m" style="left:544px;top:446px;width:33px;height:13px;background:#1a7aec;text-align:center;line-height:13px">50</div><div class="m" style="left:585px;top:446px;width:40px;height:13px;background:#f0741c;text-align:center;line-height:13px">159.2</div><div class="m" style="left:544px;top:460px;width:33px;height:13px;background:#1c77ed;text-align:center;line-height:13px">75</div><div class="m" style="left:585px;top:460px;width:40px;height:13px;background:#ee7a18;text-align:center;line-height:13px">161.8</div><div class="m" style="left:544px;top:474px;width:33px;height:13px;background:#1e6ef0;text-align:center;line-height:13px">101</div><div class="m" style="left:585px;top:474px;width:40px;height:13px;background:#ee7a18;text-align:center;line-height:13px">161.8</div><div class="m" style="left:544px;top:488px;width:33px;height:13px;background:#206af0;text-align:center;line-height:13px">126</div><div class="m" style="left:585px;top:488px;width:40px;height:13px;background:#ef771a;text-align:center;line-height:13px">160.5</div><div class="m" style="left:544px;top:502px;width:33px;height:13px;background:#2266f1;text-align:center;line-height:13px">151</div><div class="m" style="left:585px;top:502px;width:40px;height:13px;background:#f0741c;text-align:center;line-height:13px">159.2</div><div class="m" style="left:544px;top:516px;width:33px;height:13px;background:#2462f2;text-align:center;line-height:13px">176</div><div class="m" style="left:585px;top:516px;width:40px;height:13px;background:#f0741c;text-align:center;line-height:13px">159.2</div><div class="m" style="left:544px;top:530px;width:33px;height:13px;background:#265ef3;text-align:center;line-height:13px">201</div><div class="m" style="left:585px;top:530px;width:40px;height:13px;background:#f1711e;text-align:center;line-height:13px">158.0</div><div class="m" style="left:544px;top:544px;width:33px;height:13px;background:#285bf4;text-align:center;line-height:13px">226</div><div class="m" style="left:585px;top:544px;width:40px;height:13px;background:#f1711e;text-align:center;line-height:13px">158.0</div><div class="m" style="left:544px;top:558px;width:33px;height:13px;background:#2a58f5;text-align:center;line-height:13px">252</div><div class="m" style="left:585px;top:558px;width:40px;height:13px;background:#f16e20;text-align:center;line-height:13px">156.7</div><div class="m" style="left:544px;top:572px;width:33px;height:13px;background:#2c55f5;text-align:center;line-height:13px">277</div><div class="m" style="left:585px;top:572px;width:40px;height:13px;background:#f16e20;text-align:center;line-height:13px">156.7</div><div class="m" style="left:544px;top:586px;width:33px;height:12px;background:#2e52f6;text-align:center;line-height:13px">302</div><div class="m" style="left:585px;top:586px;width:40px;height:12px;background:#f26b21;text-align:center;line-height:13px">155.5</div><div class="m" style="left:544px;top:599px;width:33px;height:13px;background:#3a46f4;text-align:center;line-height:13px">403</div><div class="m" style="left:585px;top:599px;width:40px;height:13px;background:#f36823;text-align:center;line-height:13px">154.2</div><div class="m" style="left:544px;top:613px;width:33px;height:13px;background:#4838f0;text-align:center;line-height:13px">503</div><div class="m" style="left:585px;top:613px;width:40px;height:13px;background:#f46525;text-align:center;line-height:13px">153.0</div><div class="m" style="left:544px;top:627px;width:33px;height:13px;background:#5a2aec;text-align:center;line-height:13px">604</div><div class="m" style="left:585px;top:627px;width:40px;height:13px;background:#f56227;text-align:center;line-height:13px">151.7</div><div class="m" style="left:544px;top:641px;width:33px;height:13px;background:#7a16e2;text-align:center;line-height:13px">805</div><div class="m" style="left:585px;top:641px;width:40px;height:13px;background:#f56227;text-align:center;line-height:13px">151.7</div><div class="m" style="left:544px;top:655px;width:33px;height:13px;background:#960cd4;text-align:center;line-height:13px">1006</div><div class="m" style="left:585px;top:655px;width:40px;height:13px;background:#f56227;text-align:center;line-height:13px">151.7</div><div class="m" style="left:544px;top:669px;width:33px;height:13px;background:#b00ac0;text-align:center;line-height:13px">1208</div><div class="m" style="left:585px;top:669px;width:40px;height:13px;background:#f56227;text-align:center;line-height:13px">151.7</div><div class="m" style="left:544px;top:683px;width:33px;height:13px;background:#ca0aac;text-align:center;line-height:13px">1409</div><div class="m" style="left:585px;top:683px;width:40px;height:13px;background:#f56227;text-align:center;line-height:13px">151.7</div><div class="m" style="left:544px;top:697px;width:33px;height:13px;background:#e40c90;text-align:center;line-height:13px">1610</div><div class="m" style="left:585px;top:697px;width:40px;height:13px;background:#f56227;text-align:center;line-height:13px">151.7</div><svg class="ab" style="left:34px;top:68px" width="40" height="38" viewBox="0 0 40 38"><defs><linearGradient id="gc" x1="0" y1="0" x2="1" y2="1"><stop offset="0" stop-color="#e8e8e8"/><stop offset="0.5" stop-color="#c4c4c4"/><stop offset="1" stop-color="#9c9c9c"/></linearGradient><linearGradient id="ga" x1="0" y1="0" x2="1" y2="0"><stop offset="0" stop-color="#6e6e6e"/><stop offset="0.5" stop-color="#d8d8d8"/><stop offset="1" stop-color="#5e5e5e"/></linearGradient><linearGradient id="gf" x1="0" y1="0" x2="0" y2="1"><stop offset="0" stop-color="#5a98e0"/><stop offset="1" stop-color="#b4e0fa"/></linearGradient><linearGradient id="gfo" x1="0" y1="0" x2="1" y2="1"><stop offset="0" stop-color="#d8eef8"/><stop offset="1" stop-color="#8cc0dc"/></linearGradient><linearGradient id="gfb" x1="1" y1="0" x2="0" y2="1"><stop offset="0" stop-color="#c0e4f6"/><stop offset="0.6" stop-color="#9cc4dc"/><stop offset="1" stop-color="#506070"/></linearGradient><linearGradient id="gpp" x1="0" y1="0" x2="0" y2="1"><stop offset="0" stop-color="#ffffff"/><stop offset="1" stop-color="#d4d4d4"/></linearGradient><radialGradient id="gg" cx="0.45" cy="0.3" r="0.8"><stop offset="0" stop-color="#e4e4e4"/><stop offset="1" stop-color="#7c7c7c"/></radialGradient></defs><path d="M3.4 12.2 L10.1 8.4 L12.2 9.1 L23.6 3.2 L25.8 3.8 L27 5.1 L29.6 4 L30.8 5.5 L30.4 11 L10.6 22.8 L5.5 33.8 L3.4 32.1 Z" fill="url(#gfb)" stroke="#262626" stroke-width="1.1" stroke-linejoin="round"/><path d="M7.2 28 L9.1 16.6 L28.9 6.1 L29.6 11.5 L10.6 22.8 Z" fill="url(#gpp)" stroke="#444" stroke-width="0.6"/><path d="M5.5 33.8 L25.3 24.5 L33.8 12.7 L32.1 10.1 L10.6 22.8 Z" fill="url(#gfo)" stroke="#262626" stroke-width="1.1" stroke-linejoin="round"/></svg><svg class="ab" style="left:76px;top:70px" width="34" height="34" viewBox="0 0 34 34"><path d="M3.2 3.2 H30.6 V26.4 L27.2 30.4 H3.2 Z" fill="url(#gf)" stroke="#3c3c3c" stroke-width="1.2" stroke-linejoin="round"/><rect x="8.1" y="4" width="18" height="12.6" fill="#ececec"/><rect x="8.1" y="4" width="18" height="1.2" fill="#4a3ad0"/><rect x="8.1" y="7.2" width="18" height="0.8" fill="#9ab8b8"/><rect x="8.1" y="10.2" width="18" height="0.8" fill="#9ab8b8"/><rect x="8.1" y="13.2" width="18" height="0.8" fill="#9ad8d8"/><rect x="7.7" y="19.5" width="18.6" height="8.5" fill="#d8d8d8" stroke="#4a6a8a" stroke-width="0.6"/><rect x="10.2" y="21.3" width="4.5" height="6.5" rx="1" fill="#6e6e6e"/></svg><svg class="ab" style="left:122px;top:70px" width="38" height="34" viewBox="0 0 38 34"><path d="M7.2 13 L10.6 5.4 H27.4 L30.8 13" fill="none" stroke="#737373" stroke-width="1.9" stroke-linejoin="round"/><path d="M3.2 16 Q3.2 13 6 13 H32 Q34.8 13 34.8 16 V24.8 H3.2 Z" fill="#737373"/><circle cx="8.1" cy="17.8" r="2.3" fill="#f4f2ee"/><circle cx="30" cy="17.8" r="2.3" fill="#f4f2ee"/><path d="M6 24 H10.2 V28.6 Q10.2 29.9 8.1 29.9 Q6 29.9 6 28.6 Z M28 24 H32.3 V28.6 Q32.3 29.9 30.1 29.9 Q28 29.9 28 28.6 Z" fill="#737373"/></svg><svg class="ab" style="left:164px;top:68px" width="36" height="36" viewBox="0 0 36 36"><polygon points="3.2,18.4 13.2,28 13.2,32 3.2,22.6" fill="#d8d8d8" stroke="#3a3a3a" stroke-width="0.9" stroke-linejoin="round"/><polygon points="13.2,28 32.8,16.4 32.8,20.8 13.2,32" fill="#5e5e5e" stroke="#3a3a3a" stroke-width="0.9" stroke-linejoin="round"/><rect x="13.50" y="27.17" width="2.2" height="5.2" fill="#e6e6e6" stroke="#2e2e2e" stroke-width="0.8"/><rect x="17.50" y="24.80" width="2.2" height="5.2" fill="#e6e6e6" stroke="#2e2e2e" stroke-width="0.8"/><rect x="21.50" y="22.44" width="2.2" height="5.2" fill="#e6e6e6" stroke="#2e2e2e" stroke-width="0.8"/><rect x="25.50" y="20.07" width="2.2" height="5.2" fill="#e6e6e6" stroke="#2e2e2e" stroke-width="0.8"/><rect x="29.50" y="17.70" width="2.2" height="5.2" fill="#e6e6e6" stroke="#2e2e2e" stroke-width="0.8"/><polygon points="3.2,18.4 24,8.2 32.8,16.4 13.2,28" fill="url(#gc)" stroke="#3a3a3a" stroke-width="0.9" stroke-linejoin="round"/><path d="M5 20.2 q2 -0.5 3 1.6 l0 3.4" fill="none" stroke="#9a9a9a" stroke-width="0.7"/><path d="M14 3 L20.8 9.6 L18.6 9.6 L18.6 13.4 Q18.6 15.2 21 15.2 L24 15.2 L21.8 17.4 L15 17.4 Q10.2 17.4 10.2 13 L10.2 9.6 L7 9.6 Z" fill="url(#ga)" stroke="#444" stroke-width="0.9" stroke-linejoin="round"/></svg><svg class="ab" style="left:205px;top:68px" width="36" height="36" viewBox="0 0 36 36"><polygon points="3.2,18.4 13.2,28 13.2,32 3.2,22.6" fill="#d8d8d8" stroke="#3a3a3a" stroke-width="0.9" stroke-linejoin="round"/><polygon points="13.2,28 32.8,16.4 32.8,20.8 13.2,32" fill="#5e5e5e" stroke="#3a3a3a" stroke-width="0.9" stroke-linejoin="round"/><rect x="13.50" y="27.17" width="2.2" height="5.2" fill="#e6e6e6" stroke="#2e2e2e" stroke-width="0.8"/><rect x="17.50" y="24.80" width="2.2" height="5.2" fill="#e6e6e6" stroke="#2e2e2e" stroke-width="0.8"/><rect x="21.50" y="22.44" width="2.2" height="5.2" fill="#e6e6e6" stroke="#2e2e2e" stroke-width="0.8"/><rect x="25.50" y="20.07" width="2.2" height="5.2" fill="#e6e6e6" stroke="#2e2e2e" stroke-width="0.8"/><rect x="29.50" y="17.70" width="2.2" height="5.2" fill="#e6e6e6" stroke="#2e2e2e" stroke-width="0.8"/><polygon points="3.2,18.4 24,8.2 32.8,16.4 13.2,28" fill="url(#gc)" stroke="#3a3a3a" stroke-width="0.9" stroke-linejoin="round"/><path d="M5 20.2 q2 -0.5 3 1.6 l0 3.4" fill="none" stroke="#9a9a9a" stroke-width="0.7"/><path d="M7.2 5.6 L9.6 3.2 L18.4 3.2 Q21.6 3.4 21.6 7 L21.6 12 L24.4 12 L18 18.4 L11.2 12 L13.6 12 L13.6 8 Q13.6 5.6 11 5.6 Z" fill="url(#ga)" stroke="#444" stroke-width="0.9" stroke-linejoin="round"/></svg><svg class="ab" style="left:246px;top:68px" width="36" height="36" viewBox="0 0 36 36"><polygon points="3.2,18.4 13.2,28 13.2,32 3.2,22.6" fill="#d8d8d8" stroke="#3a3a3a" stroke-width="0.9" stroke-linejoin="round"/><polygon points="13.2,28 32.8,16.4 32.8,20.8 13.2,32" fill="#5e5e5e" stroke="#3a3a3a" stroke-width="0.9" stroke-linejoin="round"/><rect x="13.50" y="27.17" width="2.2" height="5.2" fill="#e6e6e6" stroke="#2e2e2e" stroke-width="0.8"/><rect x="17.50" y="24.80" width="2.2" height="5.2" fill="#e6e6e6" stroke="#2e2e2e" stroke-width="0.8"/><rect x="21.50" y="22.44" width="2.2" height="5.2" fill="#e6e6e6" stroke="#2e2e2e" stroke-width="0.8"/><rect x="25.50" y="20.07" width="2.2" height="5.2" fill="#e6e6e6" stroke="#2e2e2e" stroke-width="0.8"/><rect x="29.50" y="17.70" width="2.2" height="5.2" fill="#e6e6e6" stroke="#2e2e2e" stroke-width="0.8"/><polygon points="3.2,18.4 24,8.2 32.8,16.4 13.2,28" fill="url(#gc)" stroke="#3a3a3a" stroke-width="0.9" stroke-linejoin="round"/><path d="M5 20.2 q2 -0.5 3 1.6 l0 3.4" fill="none" stroke="#9a9a9a" stroke-width="0.7"/><path d="M7.2 5.6 L9.6 3.2 L18.4 3.2 Q21.6 3.4 21.6 7 L21.6 12 L24.4 12 L18 18.4 L11.2 12 L13.6 12 L13.6 8 Q13.6 5.6 11 5.6 Z" fill="url(#ga)" stroke="#444" stroke-width="0.9" stroke-linejoin="round"/></svg><svg class="ab" style="left:287px;top:68px" width="36" height="36" viewBox="0 0 36 36"><polygon points="3.2,20.599999999999998 13.2,30.2 13.2,34.2 3.2,24.8" fill="#d8d8d8" stroke="#3a3a3a" stroke-width="0.9" stroke-linejoin="round"/><polygon points="13.2,30.2 32.8,18.599999999999998 32.8,23.0 13.2,34.2" fill="#5e5e5e" stroke="#3a3a3a" stroke-width="0.9" stroke-linejoin="round"/><rect x="13.50" y="29.37" width="2.2" height="5.2" fill="#e6e6e6" stroke="#2e2e2e" stroke-width="0.8"/><rect x="17.50" y="27.00" width="2.2" height="5.2" fill="#e6e6e6" stroke="#2e2e2e" stroke-width="0.8"/><rect x="21.50" y="24.64" width="2.2" height="5.2" fill="#e6e6e6" stroke="#2e2e2e" stroke-width="0.8"/><rect x="25.50" y="22.27" width="2.2" height="5.2" fill="#e6e6e6" stroke="#2e2e2e" stroke-width="0.8"/><rect x="29.50" y="19.90" width="2.2" height="5.2" fill="#e6e6e6" stroke="#2e2e2e" stroke-width="0.8"/><polygon points="3.2,20.599999999999998 24,10.399999999999999 32.8,18.599999999999998 13.2,30.2" fill="url(#gc)" stroke="#3a3a3a" stroke-width="0.9" stroke-linejoin="round"/><path d="M5 22.4 q2 -0.5 3 1.6 l0 3.4" fill="none" stroke="#9a9a9a" stroke-width="0.7"/><polygon points="3.2,13.399999999999999 13.2,23.0 13.2,27.0 3.2,17.6" fill="#d8d8d8" stroke="#3a3a3a" stroke-width="0.9" stroke-linejoin="round"/><polygon points="13.2,23.0 32.8,11.399999999999999 32.8,15.8 13.2,27.0" fill="#5e5e5e" stroke="#3a3a3a" stroke-width="0.9" stroke-linejoin="round"/><rect x="13.50" y="22.17" width="2.2" height="5.2" fill="#e6e6e6" stroke="#2e2e2e" stroke-width="0.8"/><rect x="17.50" y="19.80" width="2.2" height="5.2" fill="#e6e6e6" stroke="#2e2e2e" stroke-width="0.8"/><rect x="21.50" y="17.44" width="2.2" height="5.2" fill="#e6e6e6" stroke="#2e2e2e" stroke-width="0.8"/><rect x="25.50" y="15.07" width="2.2" height="5.2" fill="#e6e6e6" stroke="#2e2e2e" stroke-width="0.8"/><rect x="29.50" y="12.70" width="2.2" height="5.2" fill="#e6e6e6" stroke="#2e2e2e" stroke-width="0.8"/><polygon points="3.2,13.399999999999999 24,3.1999999999999993 32.8,11.399999999999999 13.2,23.0" fill="#dcdad8" stroke="#3a3a3a" stroke-width="0.9" stroke-linejoin="round"/><path d="M5 15.2 q2 -0.5 3 1.6 l0 3.4" fill="none" stroke="#9a9a9a" stroke-width="0.7"/></svg><svg class="ab" style="left:327px;top:68px" width="36" height="36" viewBox="0 0 36 36"><polygon points="17.31,4.72 21.09,4.72 21.50,7.83 22.89,8.20 24.80,5.72 28.08,7.61 26.88,10.51 27.89,11.52 30.79,10.32 32.68,13.60 30.20,15.51 30.57,16.90 33.68,17.31 33.68,21.09 30.57,21.50 30.20,22.89 32.68,24.80 30.79,28.08 27.89,26.88 26.88,27.89 28.08,30.79 24.80,32.68 22.89,30.20 21.50,30.57 21.09,33.68 17.31,33.68 16.90,30.57 15.51,30.20 13.60,32.68 10.32,30.79 11.52,27.89 10.51,26.88 7.61,28.08 5.72,24.80 8.20,22.89 7.83,21.50 4.72,21.09 4.72,17.31 7.83,16.90 8.20,15.51 5.72,13.60 7.61,10.32 10.51,11.52 11.52,10.51 10.32,7.61 13.60,5.72 15.51,8.20 16.90,7.83" fill="url(#gg)" stroke="#3a3a3a" stroke-width="0.9" stroke-linejoin="round"/><circle cx="19.2" cy="19.2" r="7.8" fill="none" stroke="#e6e6e6" stroke-width="1.2"/><circle cx="19.2" cy="19.2" r="5.6" fill="none" stroke="#888" stroke-width="2.6"/><circle cx="19.2" cy="19.2" r="3.4" fill="#f3f1ed" stroke="#6a6a6a" stroke-width="0.9"/></svg></body></html>
